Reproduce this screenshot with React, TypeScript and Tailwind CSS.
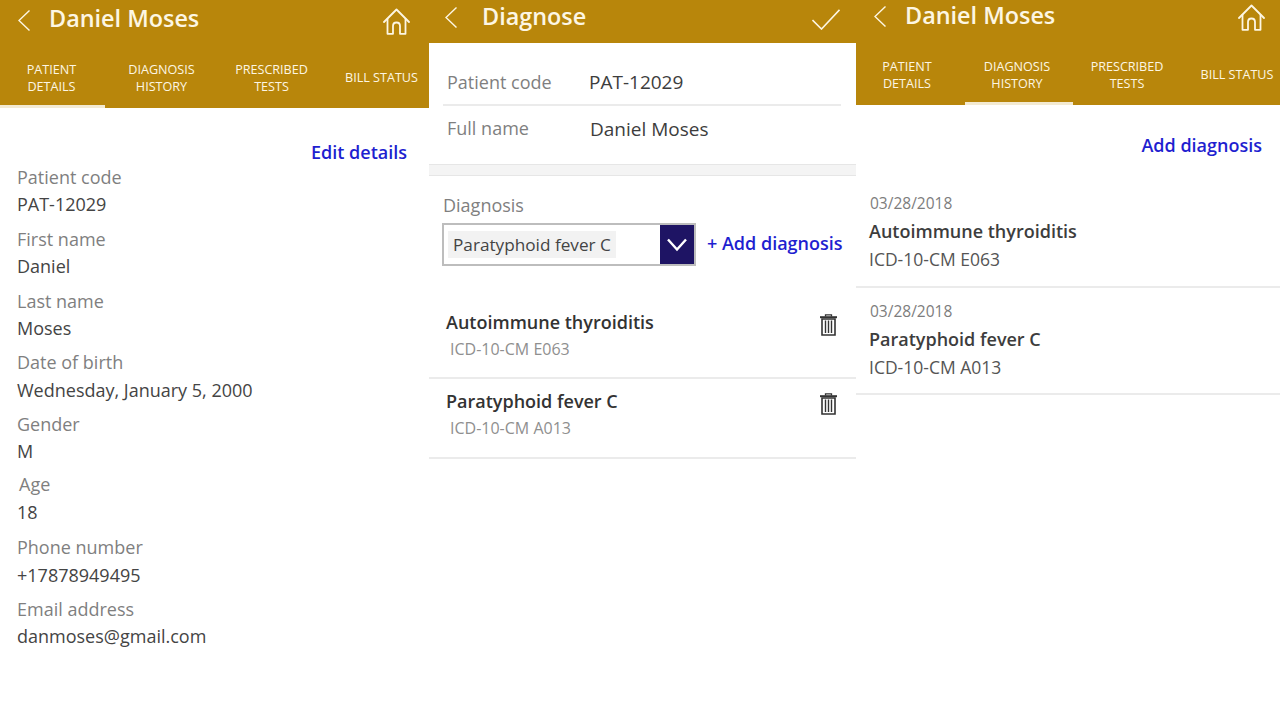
const font = "font-['Open_Sans',sans-serif]";

const tabs = [
  ["PATIENT", "DETAILS"],
  ["DIAGNOSIS", "HISTORY"],
  ["PRESCRIBED", "TESTS"],
  ["BILL STATUS"],
];

function BackIcon() {
  return (
    <svg width="12" height="21" viewBox="0 0 12 21" fill="none" stroke="currentColor" strokeWidth="1.4" className="shrink-0">
      <path d="M11.5 0.5 L1 10.5 L11.5 20.5" />
    </svg>
  );
}

function HomeIcon() {
  return (
    <svg width="27" height="27" viewBox="0 0 27 27" fill="none" stroke="currentColor" strokeWidth="1.8" strokeLinejoin="round" strokeLinecap="round" className="mt-[2px] shrink-0">
      <path d="M1 14 L13.5 1.5 L26 14" />
      <path d="M4.5 11 V25.8 H10 V18 Q10 14.5 13.5 14.5 Q17 14.5 17 18 V25.8 H22.5 V11" />
    </svg>
  );
}

function CheckIcon() {
  return (
    <svg width="28" height="21" viewBox="0 0 28 21" fill="none" stroke="currentColor" strokeWidth="1.6" className="mt-[4px] shrink-0">
      <path d="M0.5 11 L9.5 20 L27.5 0.8" />
    </svg>
  );
}

function TrashIcon() {
  return (
    <svg width="17" height="22" viewBox="0 0 17 22" fill="none" stroke="#333" className="shrink-0">
      <path d="M5.5 2.5 V0.8 H11.5 V2.5" strokeWidth="1.3" />
      <path d="M0 3.2 H17" strokeWidth="2" />
      <path d="M2 5 V21 H15 V5 Z" strokeWidth="1.6" />
      <path d="M5.5 6.5 V19 M8.5 6.5 V19 M11.5 6.5 V19" strokeWidth="1.4" />
    </svg>
  );
}

function TopBar({
  title,
  active,
  bar,
  titlePad,
  widths,
  home,
}: {
  title: string;
  active: number;
  bar: string;
  titlePad: string;
  widths: string[];
  home: string;
}) {
  return (
    <div className="bg-[#b8860b] text-[#fdf6e3]">
      <div className={`flex items-center justify-between pl-[18px] ${bar} ${home}`}>
        <div className="flex items-center">
          <BackIcon />
          <span className={`ml-[19px] text-[23.4px] leading-[32px] font-semibold ${titlePad}`}>{title}</span>
        </div>
        <HomeIcon />
      </div>
      <div className="flex h-[62px] overflow-hidden">
        {tabs.map((lines, i) => (
          <div
            key={lines[0]}
            className={`flex shrink-0 flex-col items-center justify-center border-b-[3px] pt-[6px] text-[12.6px] leading-[16.5px] ${widths[i]} ${
              i === active ? "border-[#f3ead2]" : "border-transparent"
            }`}
          >
            {lines.map((line) => (
              <span key={line}>{line}</span>
            ))}
          </div>
        ))}
      </div>
    </div>
  );
}

function Field({ label, value, className = "" }: { label: string; value: string; className?: string }) {
  return (
    <div className={`text-[18px] leading-[27px] ${className}`}>
      <div className="text-[#7f7f7f]">{label}</div>
      <div className="text-[#444]">{value}</div>
    </div>
  );
}

function PatientDetails() {
  return (
    <div className="w-[429px] shrink-0">
      <TopBar
        title="Daniel Moses"
        active={0}
        bar="h-[46px] pb-[6px]"
        titlePad="pb-[4px]"
        home="pr-[19px]"
        widths={["w-[105px] pr-[2px]", "w-[113px]", "w-[107px]", "w-[113px]"]}
      />
      <div className="pl-[17px] pr-[22px] pt-[31px]">
        <div className="text-right text-[18px] leading-[27px] font-semibold text-[#1f1fd0]">Edit details</div>
        <div className="-mt-[2px] flex flex-col gap-[8px]">
          <Field label="Patient code" value="PAT-12029" />
          <Field label="First name" value="Daniel" />
          <Field label="Last name" value="Moses" />
          <Field label="Date of birth" value="Wednesday, January 5, 2000" className="-mt-[1px] [&>div:last-child]:mt-[1px]" />
          <Field label="Gender" value="M" className="-mt-[1px]" />
          <Field label="Age" value="18" className="-mt-[2px] [&>div:first-child]:ml-[2px] [&>div:last-child]:mt-[1px]" />
          <Field label="Phone number" value="+17878949495" className="[&>div:last-child]:mt-[1px]" />
          <Field label="Email address" value="danmoses@gmail.com" className="-mt-[1px]" />
        </div>
      </div>
    </div>
  );
}

function DiagnosisRow({ name, code, height }: { name: string; code: string; height: string }) {
  return (
    <div className={`flex justify-between border-b-2 border-[#ebebeb] pl-[17px] pr-[19px] pt-[9px] ${height}`}>
      <div>
        <div className="text-[18px] leading-[27px] font-semibold text-[#333]">{name}</div>
        <div className="ml-[4px] text-[16px] leading-[27px] text-[#8f8f8f]">{code}</div>
      </div>
      <div className="mt-[5px]">
        <TrashIcon />
      </div>
    </div>
  );
}

function Diagnose() {
  return (
    <div className="w-[427px] shrink-0">
      <div className="flex h-[43px] items-center justify-between bg-[#b8860b] pb-[9px] pl-[16px] pr-[16px] text-[#fdf6e3]">
        <div className="flex items-center">
          <BackIcon />
          <span className="ml-[25px] pb-[2px] text-[23.4px] leading-[32px] font-semibold">Diagnose</span>
        </div>
        <CheckIcon />
      </div>
      <div className="pl-[14px] pr-[15px] pt-[26px]">
        <div className="flex h-[37px] items-start border-b-2 border-[#ebebeb] pl-[4px] text-[18px] leading-[27px]">
          <span className="w-[142px] text-[#7f7f7f]">Patient code</span>
          <span className="text-[19px] text-[#3d3d3d]">PAT-12029</span>
        </div>
        <div className="flex pl-[4px] pt-[9px] text-[18px] leading-[27px]">
          <span className="w-[143px] text-[#7f7f7f]">Full name</span>
          <span className="pt-[1px] text-[19px] text-[#3d3d3d]">Daniel Moses</span>
        </div>
      </div>
      <div className="mt-[21px] h-[12px] border-y border-[#e6e6e6] bg-[#f4f4f4]" />
      <div className="pl-[14px] pt-[16px] text-[18px] leading-[27px] text-[#7f7f7f]">Diagnosis</div>
      <div className="mt-[4px] flex items-center pl-[13px]">
        <div className="flex h-[43px] w-[254px] items-center justify-between border-2 border-[#bdbdbd] pl-[4px]">
          <span className="bg-[#f2f2f2] px-[5px] text-[17.2px] leading-[27px] text-[#444]">Paratyphoid fever C</span>
          <span className="flex h-full w-[34px] items-center justify-center bg-[#1e1464]">
            <svg width="20" height="14" viewBox="0 0 20 14" fill="none" stroke="white" strokeWidth="2.4">
              <path d="M1 1.5 L10 11.5 L19 1.5" />
            </svg>
          </span>
        </div>
        <span className="-mt-[2px] ml-[11px] text-[18px] leading-[27px] font-semibold text-[#1f1fd0]">+ Add diagnosis</span>
      </div>
      <div className="mt-[34px]">
        <DiagnosisRow name="Autoimmune thyroiditis" code="ICD-10-CM E063" height="h-[79px]" />
        <DiagnosisRow name="Paratyphoid fever C" code="ICD-10-CM A013" height="h-[80px]" />
      </div>
    </div>
  );
}

function HistoryRow({ name, code, className }: { name: string; code: string; className: string }) {
  return (
    <div className={`border-b-2 border-[#ebebeb] pl-[13px] ${className}`}>
      <div className="pl-[1px] text-[15.5px] leading-[25px] text-[#7d7d7d]">03/28/2018</div>
      <div className="text-[18px] leading-[30px] font-semibold text-[#3d3d3d]">{name}</div>
      <div className="text-[17.5px] leading-[27px] text-[#555]">{code}</div>
    </div>
  );
}

function DiagnosisHistory() {
  return (
    <div className="w-[424px] shrink-0">
      <TopBar
        title="Daniel Moses"
        active={1}
        bar="h-[43px] pb-[11px]"
        titlePad="pb-[2px]"
        home="pr-[15px]"
        widths={["w-[109px] pr-[7px]", "w-[108px] pr-[4px]", "w-[108px]", "w-[112px]"]}
      />
      <div className="pt-[27px]">
        <div className="pr-[18px] text-right text-[18px] leading-[27px] font-semibold text-[#1f1fd0]">Add diagnosis</div>
        <div className="mt-[32px]">
          <HistoryRow name="Autoimmune thyroiditis" code="ICD-10-CM E063" className="h-[97px]" />
          <HistoryRow name="Paratyphoid fever C" code="ICD-10-CM A013" className="mt-[11px] h-[96px]" />
        </div>
      </div>
    </div>
  );
}

export default function App() {
  return (
    <div className={`flex h-[720px] w-[1280px] overflow-hidden bg-white ${font}`}>
      <PatientDetails />
      <Diagnose />
      <DiagnosisHistory />
    </div>
  );
}
